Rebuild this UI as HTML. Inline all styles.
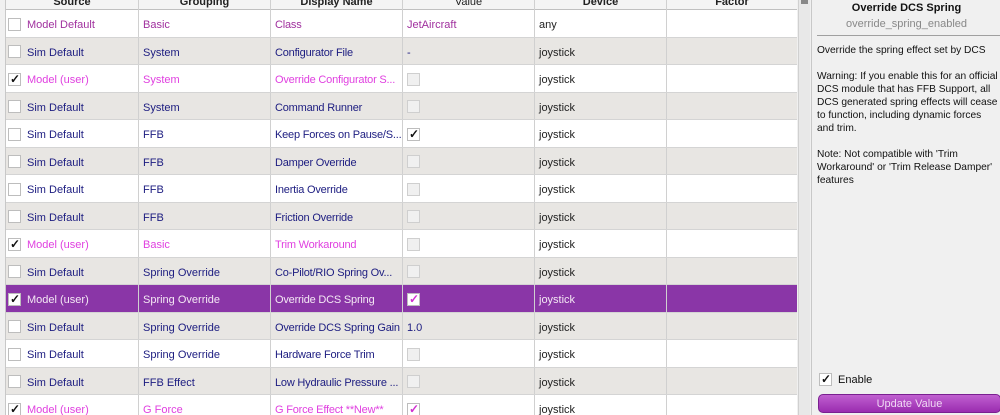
<!DOCTYPE html>
<html><head><meta charset="utf-8"><style>
*{margin:0;padding:0;box-sizing:border-box}
html,body{width:1000px;height:415px;overflow:hidden}
body{background:#f0f0f0;font-family:"Liberation Sans",sans-serif;font-size:11px;position:relative}
#tbl{position:absolute;left:5px;top:0;width:792px;height:415px;background:#fff;border-left:1px solid #c8c8c8;overflow:hidden}
.hdr{position:absolute;top:-4px;left:0;height:14px;width:792px;background:#f4f4f4;border-bottom:1px solid #c0c0c0}
.hdr div{position:absolute;top:0;height:14px;text-align:center;font-weight:bold;font-size:11px;color:#222;border-right:1px solid #d0d0d0;line-height:12px}
.row{position:absolute;left:0;width:792px;height:27.5px;border-bottom:1px solid #d4d4d4}
.row.w{background:#fff}.row.g{background:#e8e6e3}.row.s{background:#8a36a7}
.c{position:absolute;top:0;height:100%;border-right:1px solid #d0d0d0;line-height:30px;padding-left:4px;white-space:nowrap;overflow:hidden}
.cb{display:inline-block;width:13px;height:13px;border:1px solid #bdbdbd;background:#fff;vertical-align:middle;position:relative;top:-1px;margin-right:6px}
.cb.d{background:#f0f0f0;border-color:#cfcfcf}
.ck::after{content:"✓";position:absolute;left:1px;top:-3px;font-size:12px;font-weight:bold;color:#111;line-height:16px}
.ckm::after{content:"✓";position:absolute;left:1px;top:-3px;font-size:12px;font-weight:bold;color:#d030d0;line-height:16px}
.md{color:#a0309e}.sd{color:#1c1c80}.mu{color:#e040e0}.s .c,.s .c .dk{color:#f4e8f4}
.dk{color:#222}
#sb{position:absolute;left:798px;top:0;width:12px;height:415px;background:#e8e8e8;border-left:1px solid #d0d0d0}
#panel{position:absolute;left:811px;top:0;width:189px;height:415px;background:#f0f0f0;border-left:1px solid #c8c8c8}
</style></head><body>
<div id="tbl">
<div class="hdr">
<div style="left:0;width:133px">Source</div><div style="left:133px;width:132px">Grouping</div><div style="left:265px;width:132px">Display Name</div><div style="left:397px;width:132px;font-weight:normal">Value</div><div style="left:529px;width:132px">Device</div><div style="left:661px;width:131px">Factor</div>
</div>
<div id="rows"></div>
</div>
<div id="sb"><div style="height:4px;background:#888;margin:0 2px"></div></div>
<div id="panel">
<div style="position:absolute;top:2px;left:0;width:189px;text-align:center;font-weight:bold;color:#111">Override DCS Spring</div>
<div style="position:absolute;top:18px;left:0;width:189px;text-align:center;color:#888">override_spring_enabled</div>
<div style="position:absolute;top:35px;left:5px;width:184px;border-top:1px solid #a0a0a0"></div>
<div style="position:absolute;top:44px;left:5px;width:184px;color:#111;line-height:13px;font-size:10.2px">Override the spring effect set by DCS<br><br>Warning: If you enable this for an official DCS module that has FFB Support, all DCS generated spring effects will cease to function, including dynamic forces and trim.<br><br>Note: Not compatible with 'Trim Workaround' or 'Trim Release Damper' features</div>
<div style="position:absolute;top:373px;left:7px;color:#111;line-height:14px"><span class="cb ck" style="margin-right:6px"></span>Enable</div>
<div style="position:absolute;top:394px;left:6px;width:183px;height:19px;border-radius:5px;background:linear-gradient(#c060d0,#9a2cb0);border:1px solid #7a2090;color:#f0d8f4;text-align:center;line-height:19px">Update Value</div>
</div>
<script>
var R=[
["md","",0,"Model Default","Basic","Class","JetAircraft","any"],
["sd","",0,"Sim Default","System","Configurator File","-","joystick"],
["mu","ck",0,"Model (user)","System","Override Configurator S...","cbd","joystick"],
["sd","",0,"Sim Default","System","Command Runner","cbd","joystick"],
["sd","",0,"Sim Default","FFB","Keep Forces on Pause/S...","cbk","joystick"],
["sd","",0,"Sim Default","FFB","Damper Override","cbd","joystick"],
["sd","",0,"Sim Default","FFB","Inertia Override","cbd","joystick"],
["sd","",0,"Sim Default","FFB","Friction Override","cbd","joystick"],
["mu","ck",0,"Model (user)","Basic","Trim Workaround","cbd","joystick"],
["sd","",0,"Sim Default","Spring Override","Co-Pilot/RIO Spring Ov...","cbd","joystick"],
["mu","ck",1,"Model (user)","Spring Override","Override DCS Spring","cbm","joystick"],
["sd","",0,"Sim Default","Spring Override","Override DCS Spring Gain","1.0","joystick"],
["sd","",0,"Sim Default","Spring Override","Hardware Force Trim","cbd","joystick"],
["sd","",0,"Sim Default","FFB Effect","Low Hydraulic Pressure ...","cbd","joystick"],
["mu","ck",0,"Model (user)","G Force","G Force Effect **New**","cbm","joystick"]];
var h="";var L=[0,133,265,397,529,661],W=[133,132,132,132,132,131];
R.forEach(function(r,i){
var cls=r[2]?"s":(i%2?"g":"w");
h+='<div class="row '+cls+'" style="top:'+(10+i*27.5)+'px">';
var cells=['<span class="cb '+r[1]+'"></span>'+r[3],r[4],'<span style="letter-spacing:-0.2px">'+r[5]+'</span>',
 r[6]=="cbd"?'<span class="cb d"></span>':r[6]=="cbk"?'<span class="cb ck"></span>':r[6]=="cbm"?'<span class="cb ckm"></span>':r[6],
 '<span class="dk">'+r[7]+'</span>',''];
for(var k=0;k<6;k++)h+='<div class="c '+(k<4?r[0]:'')+'" style="left:'+L[k]+'px;width:'+W[k]+'px;'+(k==0?'padding-left:2px':'')+'">'+cells[k]+'</div>';
h+='</div>';});
document.getElementById('rows').innerHTML=h;
</script>
</body></html>
